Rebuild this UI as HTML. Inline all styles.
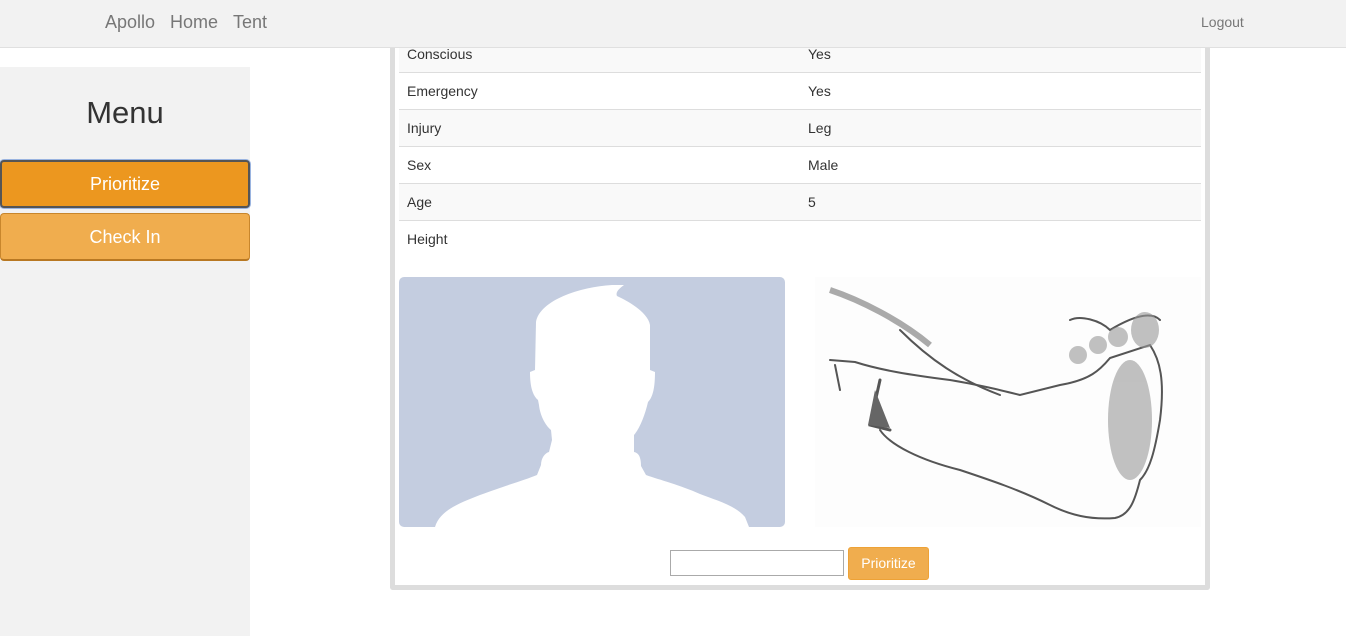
<!DOCTYPE html>
<html><head><style>
*{margin:0;padding:0;box-sizing:border-box}
body{width:1346px;height:636px;overflow:hidden;background:#fff;font-family:"Liberation Sans",sans-serif;position:relative}
.nav{position:absolute;left:0;top:0;width:1346px;height:48px;background:#f2f2f2;border-bottom:1px solid #e0e0e0;z-index:10}
.nav span{position:absolute;top:12px;font-size:18px;color:#777}
.nav .lo{font-size:14px;top:14px;left:1201px}
.side{position:absolute;left:0;top:67px;width:250px;height:569px;background:#f2f2f2}
.side h2{position:absolute;top:28px;width:250px;text-align:center;font-weight:normal;font-size:31px;color:#333}
.btn{position:absolute;left:0;width:250px;border-radius:4px;color:#fff;font-size:18px;text-align:center}
.b1{top:93px;height:48px;background:#ec971f;border:2px solid #555;line-height:44px;box-shadow:0 0 0 1px #9ab4e0}
.b2{top:146px;height:48px;background:#f0ad4e;border:1px solid #c8862c;border-bottom:2px solid #b87822;line-height:46px}
.box{position:absolute;left:390px;top:30px;width:820px;height:560px;border:5px solid #ddd;border-top:none;border-radius:0 0 3px 3px;background:#fff}
.row{position:absolute;left:4px;width:802px;height:37px;border-top:1px solid #ddd;font-size:14px;color:#333}
.row span{position:absolute;top:10px;left:8px}
.row span+span{left:409px}
.in{position:absolute;left:670px;top:550px;width:174px;height:26px;border:1px solid #aaa}
.pb{position:absolute;left:848px;top:547px;width:81px;height:33px;background:#f0ad4e;border:1px solid #eea236;border-radius:3px;color:#fff;font-size:14px;line-height:31px;text-align:center}
</style></head><body>
<div class="nav"><span style="left:105px">Apollo</span><span style="left:170px">Home</span><span style="left:233px">Tent</span><span class="lo">Logout</span></div>
<div class="side"><h2>Menu</h2><div class="btn b1">Prioritize</div><div class="btn b2">Check In</div></div>
<div class="box">
<div class="row" style="top:3px;background:#f9f9f9;border-top:none;height:40px"><span style="top:13px">Conscious</span><span style="top:13px">Yes</span></div>
<div class="row" style="top:42px"><span>Emergency</span><span>Yes</span></div>
<div class="row" style="top:79px;background:#f9f9f9"><span>Injury</span><span>Leg</span></div>
<div class="row" style="top:116px"><span>Sex</span><span>Male</span></div>
<div class="row" style="top:153px;background:#f9f9f9"><span>Age</span><span>5</span></div>
<div class="row" style="top:190px"><span>Height</span><span></span></div>
</div>
<svg style="position:absolute;left:0;top:0" width="1346" height="636">
<rect x="399" y="277" width="386" height="250" rx="5" fill="#c4cde0"/>
<path fill="#fff" d="M435,527 C440,510 460,503 480,495 C510,484 525,480 537,475 L541,465 C541,458 545,453 549,452 L552,440 L551,430 C545,425 540,415 539,405 L538,400 C532,395 530,385 530,372 L535,370 L536,322 C540,300 580,287 612,285 L624,285 C620,288 615,292 617,296 C630,302 648,313 650,325 L650,370 L655,372 C655,390 652,398 648,402 C645,415 640,428 634,435 L634,452 C640,453 641,460 641,466 L646,475 C660,480 680,485 700,494 C715,500 735,505 745,517 L749,527 Z"/>
<rect x="815" y="277" width="386" height="250" fill="#fdfdfd"/>
<g fill="none" stroke="#555" stroke-linecap="round">
<path d="M830,360 L855,362 C880,370 910,375 950,380 C980,385 1000,390 1020,395 L1060,385 C1090,380 1100,370 1110,358 L1150,345 C1160,360 1165,380 1160,420 C1155,450 1150,470 1140,480 C1135,500 1130,515 1115,518 C1090,520 1070,515 1050,505 C1020,490 990,480 960,470 C920,460 890,445 880,430" stroke-width="2"/>
<path d="M880,380 L870,425 L890,430" stroke-width="3"/>
<path d="M900,330 C930,360 960,380 1000,395" stroke-width="2"/>
<path d="M1070,320 C1080,315 1100,320 1110,330 C1130,318 1150,310 1160,320" stroke-width="2"/>
<path d="M835,365 L840,390" stroke-width="2"/>
</g>
<g fill="#999" opacity=".6">
<ellipse cx="1130" cy="420" rx="22" ry="60"/>
<ellipse cx="1145" cy="330" rx="14" ry="18"/>
<ellipse cx="1118" cy="337" rx="10" ry="10"/>
<ellipse cx="1098" cy="345" rx="9" ry="9"/>
<ellipse cx="1078" cy="355" rx="9" ry="9"/>
</g>
<path d="M875,390 L868,425 L890,428 Z" fill="#666"/>
<path d="M830,290 C860,300 900,320 930,345" stroke="#aaa" stroke-width="6" fill="none"/>
</svg>
<div class="in"></div>
<div class="pb">Prioritize</div>
</body></html>
